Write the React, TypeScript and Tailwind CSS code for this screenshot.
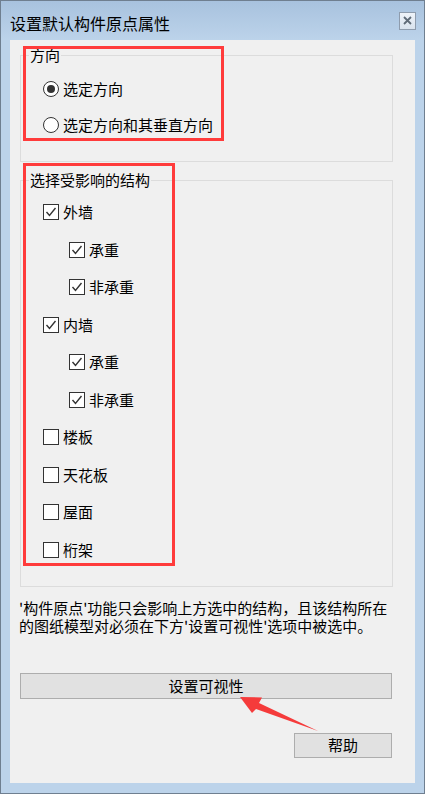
import React from 'react'

const font = { fontFamily: '"Noto Sans CJK SC", "Microsoft YaHei", sans-serif' }

function Radio({ checked, label }: { checked?: boolean; label: string }) {
  return (
    <div className="flex h-[20px] items-center gap-[4px]">
      <span className="flex h-[16px] w-[16px] items-center justify-center rounded-full border border-[#333] bg-white">
        {checked && <span className="h-[8px] w-[8px] rounded-full bg-[#333]" />}
      </span>
      <span className="text-[15px] leading-[20px] text-black">{label}</span>
    </div>
  )
}

function Check({ checked, label, sub }: { checked?: boolean; label: string; sub?: boolean }) {
  return (
    <div className={`flex h-[20px] items-center gap-[4px] ${sub ? 'pl-[26px]' : ''}`}>
      <span className="flex h-[16px] w-[16px] items-center justify-center border border-[#333] bg-white">
        {checked && (
          <svg width="12" height="12" viewBox="0 0 12 12">
            <path d="M1.5 6 L4.5 9.5 L10.5 2" fill="none" stroke="#333" strokeWidth="1.4" />
          </svg>
        )}
      </span>
      <span className="text-[15px] leading-[20px] text-black">{label}</span>
    </div>
  )
}

const structures = [
  { label: '外墙', checked: true },
  { label: '承重', checked: true, sub: true },
  { label: '非承重', checked: true, sub: true },
  { label: '内墙', checked: true },
  { label: '承重', checked: true, sub: true },
  { label: '非承重', checked: true, sub: true },
  { label: '楼板' },
  { label: '天花板' },
  { label: '屋面' },
  { label: '桁架' },
]

export default function App() {
  return (
    <div className="relative flex h-[794px] w-[425px] flex-col border border-[#6f7f90] bg-[#bcd3ea]" style={font}>
      {/* title bar */}
      <div className="flex h-[39px] items-center justify-between bg-gradient-to-b from-[#a8c2de] to-[#bcd3ea] pl-[9px] pr-[8px]">
        <span className="mt-[4px] text-[16px] leading-[20px] text-black">设置默认构件原点属性</span>
        <span className="flex h-[18px] w-[17px] items-center justify-center border border-[#8e9cad] bg-gradient-to-b from-[#eef3f9] to-[#d9e3ee]">
          <svg width="9" height="9" viewBox="0 0 9 9">
            <path d="M1 1 L8 8 M8 1 L1 8" stroke="#5f6b78" strokeWidth="1.8" />
          </svg>
        </span>
      </div>

      {/* client area */}
      <div className="mx-[9px] flex h-[743px] flex-col bg-[#f0f0f0]">
        <fieldset className="ml-[10px] mt-[5px] w-[373px] border border-[#dcdcdc] pb-[26px]">
          <legend className="ml-[8px] px-[1px] text-[15px] leading-[20px] text-black">方向</legend>
          <div className="mt-[14px] flex flex-col gap-[16px] pl-[22px]">
            <Radio checked label="选定方向" />
            <Radio label="选定方向和其垂直方向" />
          </div>
        </fieldset>

        <fieldset className="ml-[10px] mt-[8px] w-[373px] border border-[#dcdcdc] pb-[26px]">
          <legend className="ml-[8px] px-[1px] text-[15px] leading-[20px] text-black">选择受影响的结构</legend>
          <div className="mt-[12px] flex flex-col gap-[17.5px] pl-[22px]">
            {structures.map((s, i) => (
              <Check key={i} label={s.label} checked={s.checked} sub={s.sub} />
            ))}
          </div>
        </fieldset>

        <div className="ml-[9px] mt-[12px] whitespace-nowrap text-[15px] leading-[18px] text-black">
          '构件原点'功能只会影响上方选中的结构，且该结构所在
          <br />
          的图纸模型对必须在下方'设置可视性'选项中被选中。
        </div>

        <button className="ml-[10px] mt-[38px] h-[26px] w-[372px] border border-[#adadad] bg-[#e1e1e1] text-[15px] leading-[20px] text-black">
          设置可视性
        </button>
        <button className="ml-[284px] mt-[34px] h-[25px] w-[98px] border border-[#adadad] bg-[#e1e1e1] text-[15px] leading-[20px] text-black">
          帮助
        </button>
      </div>

      {/* red annotations */}
      <div className="pointer-events-none absolute left-[22px] top-[45px] h-[95px] w-[201px] border-[3px] border-[#ff3b3b]" />
      <div className="pointer-events-none absolute left-[22px] top-[162px] h-[403px] w-[152px] border-[3px] border-[#ff3b3b]" />
      <svg className="pointer-events-none absolute left-[-1px] top-[-1px]" width="425" height="794">
        <polygon points="240,697 262,697.5 259,703 318,731 256,709 252,713" fill="#f53b3b" />
      </svg>
    </div>
  )
}
